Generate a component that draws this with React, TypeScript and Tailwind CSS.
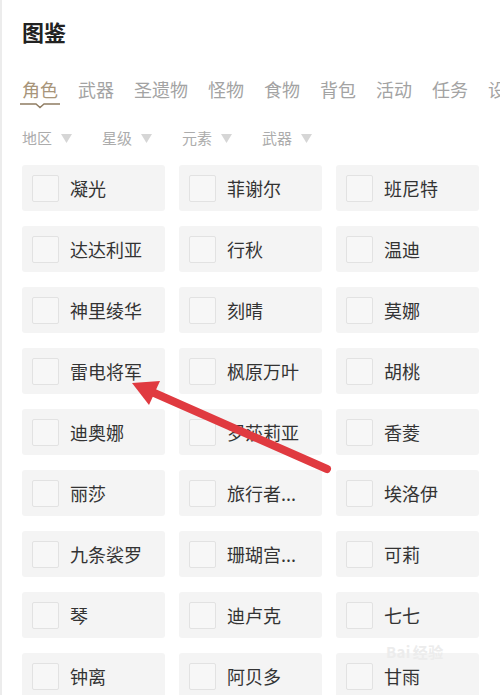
import React from 'react';

const FONT = { fontFamily: '"Noto Sans CJK SC", "Noto Sans", sans-serif' };

const TABS = ['角色', '武器', '圣遗物', '怪物', '食物', '背包', '活动', '任务', '设置'];
const FILTERS = ['地区', '星级', '元素', '武器'];
const NAMES = [
  '凝光', '菲谢尔', '班尼特',
  '达达利亚', '行秋', '温迪',
  '神里绫华', '刻晴', '莫娜',
  '雷电将军', '枫原万叶', '胡桃',
  '迪奥娜', '罗莎莉亚', '香菱',
  '丽莎', '旅行者...', '埃洛伊',
  '九条裟罗', '珊瑚宫...', '可莉',
  '琴', '迪卢克', '七七',
  '钟离', '阿贝多', '甘雨',
];

function Card({ name }: { name: string }) {
  return (
    <div className="h-[46px] bg-[#f4f4f4] rounded-[3px] flex items-center pl-[10px]">
      <div className="w-[27px] h-[27px] border border-[#e2e2e2] bg-[#f7f7f7] rounded-[2px] shrink-0" />
      <span className="ml-[11px] text-[18px] leading-none text-[#333] whitespace-nowrap">{name}</span>
    </div>
  );
}

export default function App() {
  return (
    <div className="relative w-[500px] h-[695px] overflow-hidden bg-white border-l-2 border-[#ececec]" style={FONT}>
      <div className="pl-[20px] pt-[17px]">
        <h1 className="text-[22px] leading-[28px] font-bold text-[#222]">图鉴</h1>
      </div>

      <div className="mt-[32px] pl-[20px] pb-[8px] flex gap-[20px] whitespace-nowrap overflow-hidden">
        {TABS.map((t, i) => (
          <div key={t} className="relative shrink-0">
            <span className={`text-[18px] leading-[24px] ${i === 0 ? 'text-[#a8957a]' : 'text-[#a3a3a3]'}`}>{t}</span>
            {i === 0 && (
              <svg className="absolute left-[-2px] top-[25px]" width="40" height="7" viewBox="0 0 40 7">
                <path d="M0 2 H16 L20 5.5 L24 2 H40" fill="none" stroke="#8f7c62" strokeWidth="1.4" />
              </svg>
            )}
          </div>
        ))}
      </div>

      <div className="mt-[18px] pl-[20px] flex">
        {FILTERS.map(f => (
          <div key={f} className="w-[80px] flex items-center gap-[9px] shrink-0">
            <span className="text-[15px] leading-[20px] text-[#acacac]">{f}</span>
            <svg width="11" height="9" viewBox="0 0 11 9">
              <path d="M0 0 H11 L5.5 9 Z" fill="#d6d6d6" />
            </svg>
          </div>
        ))}
      </div>

      <div className="mt-[17px] pl-[20px] pr-[21px] grid grid-cols-3 gap-x-[14px] gap-y-[15px]">
        {NAMES.map(n => <Card key={n} name={n} />)}
      </div>

      {/* red annotation arrow */}
      <svg className="absolute left-0 top-0 pointer-events-none" width="500" height="695" viewBox="0 0 500 695">
        <line x1="325" y1="469" x2="150" y2="392" stroke="#e03a40" strokeWidth="8" strokeLinecap="round" />
        <polygon points="130,383 158,381 147,405" fill="#e03a40" />
      </svg>

      <div className="absolute left-[384px] top-[644px] text-[15px] leading-none text-[#ececec] font-bold tracking-wide">
        Bai<span className="ml-[2px]">经验</span>
      </div>
    </div>
  );
}
